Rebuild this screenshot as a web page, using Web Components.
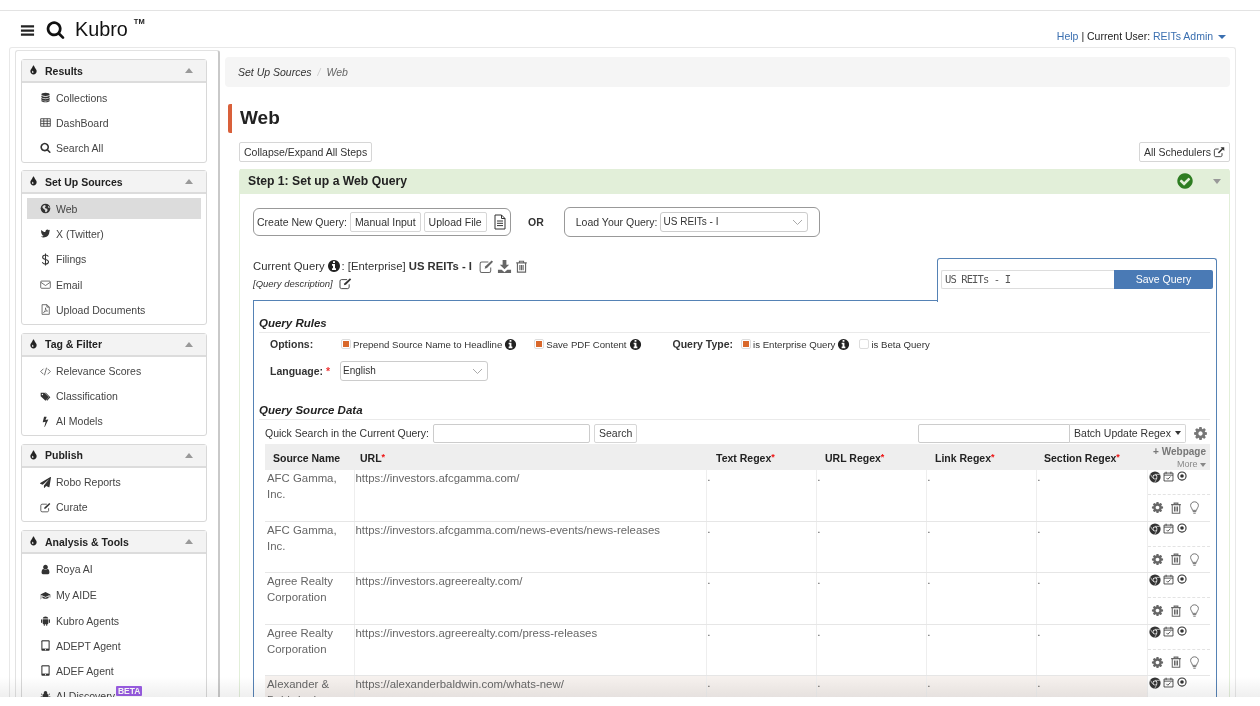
<!DOCTYPE html>
<html lang="en">
<head>
<meta charset="utf-8">
<title>Kubro - Web</title>
<style>
  html, body { margin: 0; height: 706px; overflow: hidden; background: #fff; }
  body { font-family: "Liberation Sans", Arial, sans-serif; color: #333; font-size: 11px; }
</style>
</head>
<body>
<kb-app></kb-app>

<script>
// FontAwesome-4 style glyphs, all in a 1792 box unless the entry says otherwise
const ICONS = {
  search: 'M1216 832q0-185-131.5-316.5t-316.5-131.5-316.5 131.5-131.5 316.5 131.5 316.5 316.5 131.5 316.5-131.5 131.5-316.5zm512 832q0 52-38 90t-90 38q-54 0-90-38l-343-342q-179 124-399 124-143 0-273.5-55.5t-225-150-150-225-55.5-273.5 55.5-273.5 150-225 225-150 273.5-55.5 273.5 55.5 225 150 150 225 55.5 273.5q0 220-124 399l343 343q37 37 37 90z',
  info: 'M1152 1376v-160q0-14-9-23t-23-9h-96v-512q0-14-9-23t-23-9h-320q-14 0-23 9t-9 23v160q0 14 9 23t23 9h96v320h-96q-14 0-23 9t-9 23v160q0 14 9 23t23 9h448q14 0 23-9t9-23zm-128-896v-160q0-14-9-23t-23-9h-192q-14 0-23 9t-9 23v160q0 14 9 23t23 9h192q14 0 23-9t9-23zm640 416q0 209-103 385.5t-279.5 279.5-385.5 103-385.5-103-279.5-279.5-103-385.5 103-385.5 279.5-279.5 385.5-103 385.5 103 279.5 279.5 103 385.5z',
  tint: 'M896 1152q0-36-20-69-1-1-15.5-22.5t-25.5-38-25-44-21-50.5q-4-16-21-16t-21 16q-7 23-21 50.5t-25 44-25.5 38-15.5 22.5q-20 33-20 69 0 53 37.5 90.5t90.5 37.5 90.5-37.5 37.5-90.5zm512-128q0 212-150 362t-362 150-362-150-150-362q0-145 81-275 6-9 62.5-90.5t101-151 99.5-178 83-201.5q9-30 34-47t51-17 51.5 17 33.5 47q28 93 83 201.5t99.5 178 101 151 62.5 90.5q81 127 81 275z',
  cog: 'M1152 896q0-106-75-181t-181-75-181 75-75 181 75 181 181 75 181-75 75-181zm512-109v222q0 12-8 23t-20 13l-185 28q-19 54-39 91 35 50 107 138 10 12 10 25t-9 23q-27 37-99 108t-94 71q-12 0-26-9l-138-108q-44 23-91 38-16 136-29 186-7 28-36 28h-222q-14 0-24.5-8.5t-11.5-21.5l-28-184q-49-16-90-37l-141 107q-10 9-25 9-14 0-25-11-126-114-165-168-7-10-7-23 0-12 8-23 15-21 51-66.5t54-70.5q-27-50-41-99l-183-27q-13-2-21-12.5t-8-23.5v-222q0-12 8-23t19-13l186-28q14-46 39-92-40-57-107-138-10-12-10-24 0-10 9-23 26-36 98.5-107.5t94.5-71.5q13 0 26 10l138 107q44-23 91-38 16-136 29-186 7-28 36-28h222q14 0 24.5 8.5t11.5 21.5l28 184q49 16 90 37l142-107q9-9 24-9 13 0 25 10 129 119 165 170 7 8 7 22 0 12-8 23-15 21-51 66.5t-54 70.5q26 50 41 98l183 28q13 2 21 12.5t8 23.5z',
  twitter: 'M1684 408q-67 98-162 167 1 14 1 42 0 130-38 259.5t-115.5 248.5-184.5 210.5-258 146-323 54.5q-271 0-496-145 35 4 78 4 225 0 401-138-105-2-188-64.5t-114-159.5q33 5 61 5 43 0 85-11-112-23-185.5-111.5t-73.5-205.5v-4q68 38 146 41-66-44-105-115t-39-154q0-88 44-163 121 149 294.5 238.5t371.5 99.5q-8-38-8-74 0-134 94.5-228.5t228.5-94.5q140 0 236 102 109-21 200-76-35 110-132 170 96-11 192-52z',
  check: 'M1412 734q0-28-18-46l-91-90q-19-19-45-19t-45 19l-408 407-226-226q-19-19-45-19t-45 19l-91 90q-18 18-18 46 0 27 18 45l362 362q19 19 45 19 27 0 46-19l543-543q18-18 18-45zm252 162q0 209-103 385.5t-279.5 279.5-385.5 103-385.5-103-279.5-279.5-103-385.5 103-385.5 279.5-279.5 385.5-103 385.5 103 279.5 279.5 103 385.5z',
  bolt: 'M1333 566q18 20 7 44l-540 1157q-13 25-42 25-4 0-14-2-17-5-25.5-19t-4.5-30l197-808-406 101q-4 1-12 1-18 0-31-11-18-15-13-39l201-825q4-14 16-23t28-9h328q19 0 32 12.5t13 29.5q0 8-5 18l-171 463 396-98q8-2 12-2 19 0 34 15z',
  plane: 'M1764 11q33 24 27 64l-256 1536q-5 29-32 45-14 8-31 8-11 0-24-5l-453-185-242 295q-18 23-49 23-13 0-22-4-19-7-30.5-23.5t-11.5-36.5v-349l864-1059-1069 925-395-162q-37-14-40-55-2-40 32-59l1664-960q15-9 32-9 19 0 34 11z',
  user: 'M1536 1399q0 109-62.5 187t-150.5 78h-854q-88 0-150.5-78t-62.5-187q0-85 8.5-160.5t31.5-152 58.5-131 94-89 134.5-34.5q131 128 313 128t313-128q76 0 134.5 34.5t94 89 58.5 131 31.5 152 8.5 160.5zm-256-887q0 159-112.5 271.5t-271.5 112.5-271.5-112.5-112.5-271.5 112.5-271.5 271.5-112.5 271.5 112.5 112.5 271.5z',
};

// the rest are plain drawn shapes, viewBox 0 0 16 16
const SHAPES = {
  database: '<ellipse cx="8" cy="3.4" rx="6" ry="2.4" fill="currentColor"/><path d="M2 5v2c0 1.4 2.7 2.4 6 2.4s6-1 6-2.400V5c-1 1.300-3.500 2-6 2S3 6.300 2 5zM2 8.500v2c0 1.400 2.700 2.400 6 2.400s6-1 6-2.400v-2c-1 1.300-3.500 2-6 2s-5-.7-6-2zM2 11.800v1c0 1.400 2.700 2.200 6 2.200s6-.8 6-2.200v-1c-1 1.300-3.500 2-6 2s-5-.7-6-2z" fill="currentColor"/>',
  table: '<path d="M1 2.500h14v11H1zM1 6h14M1 9.700h14M5.500 2.500v11M10.500 2.500v11" fill="none" stroke="currentColor" stroke-width="1.200"/>',
  globe: '<circle cx="8" cy="8" r="7" fill="currentColor"/><path d="M4 4.500 7 3l1.500 1.500L7 6.500 8.500 8l2 .5.500 2.500-2 2.500-1.500-.5V10L5 8.500 3.500 6.500zM11.500 4l2 1.500.5 2-1.800-.5z" fill="#dcdcdc"/>',
  dollar: '<path d="M11.500 4.500C11 3 9.700 2.400 8 2.400c-2 0-3.500 1-3.500 2.800 0 3.800 7.200 1.900 7.200 5.700 0 1.800-1.600 2.800-3.700 2.800-2 0-3.400-.8-3.900-2.500M8 .5v15" fill="none" stroke="currentColor" stroke-width="1.300"/>',
  mail: '<rect x="1" y="3" width="14" height="10.500" rx="1.300" fill="none" stroke="currentColor"/><path d="m1.500 5 6.500 4.500L14.500 5" fill="none" stroke="currentColor"/>',
  pdf: '<path d="M3 1h7l3.500 3.500V15H3zM10 1v3.500h3.500" fill="none" stroke="currentColor"/><path d="M5 12.500c2-1 3.500-4.500 3-7 .2 2.500 1.500 4.500 3 4.800-2-.2-4 .5-6 2.200z" fill="none" stroke="currentColor" stroke-width=".8"/>',
  code: '<path d="M5 4 1 8l4 4M11 4l4 4-4 4M9.500 2.500l-3 11" fill="none" stroke="currentColor"/>',
  tags: '<path d="M1 2.500h5.500L13 9l-5 5-7-6.500z" fill="currentColor"/><path d="M8.500 2.500 15 9l-4.500 5-1-.9L13.300 9 7 2.500z" fill="currentColor"/><circle cx="3.500" cy="5" r="1" fill="#fff"/>',
  cap: '<path d="M8 3 .5 6.500 8 10l6-2.800V11h1V6.500z" fill="currentColor"/><path d="M3.500 9v2.500C5 13 11 13 12.500 11.500V9L8 11.200z" fill="currentColor"/><path d="M1.500 7v5l-1 1.500" fill="none" stroke="currentColor" stroke-width=".8"/>',
  android: '<path d="M4 5.200c.2-1.800 2-3 4-3s3.800 1.200 4 3zM4 6h8v6.500c0 .6-.4 1-1 1h-.5V15.500H9V13.500H7V15.500H5.500V13.500H5c-.6 0-1-.4-1-1z" fill="currentColor"/><rect x="1.500" y="6" width="1.800" height="5.500" rx=".9" fill="currentColor"/><rect x="12.700" y="6" width="1.800" height="5.500" rx=".9" fill="currentColor"/>',
  tablet: '<rect x="2" y="0.500" width="12" height="15" rx="1.300" fill="currentColor"/><rect x="3.500" y="2" width="9" height="10.500" fill="#fff"/><circle cx="8" cy="14" r=".8" fill="#fff"/>',
  bug: '<ellipse cx="8" cy="9.500" rx="4" ry="5" fill="currentColor"/><circle cx="8" cy="4" r="2.500" fill="currentColor"/><path d="M1.500 5.500 4 7.500M14.500 5.500 12 7.500M1 10h3M15 10h-3M2 14.500l2.500-2M14 14.500l-2.500-2" stroke="currentColor" stroke-width="1.300"/>',
  edit: '<path d="M12.500 9v3.500c0 1-.8 1.800-1.800 1.800H3c-1 0-1.800-.8-1.800-1.800V5C1.200 4 2 3.200 3 3.200h7" fill="none" stroke="currentColor" stroke-width="1.100"/><path d="M13.500 1.500 15 3 8.500 9.500 6 10.300l.8-2.500z" fill="currentColor"/>',
  download: '<path d="M6 1h4v5h3L8 11 3 6h3zM1 11.500h4l3 2.500 3-2.500h4V15H1z" fill="currentColor"/>',
  trash: '<path d="M5.500 3V1.500h5V3M1.500 3.500h13M3 3.500V15h10V3.500M6 6v6.500M8 6v6.500M10 6v6.500" fill="none" stroke="currentColor" stroke-width="1.400"/>',
  file: '<path d="M3 1h6.500L13 4.500V15H3zM9.500 1v3.500H13M5 7h6M5 9.300h6M5 11.600h6" fill="none" stroke="currentColor"/>',
  link: '<path d="M12 9.500v3c0 1-.7 1.700-1.700 1.700H3.500c-1 0-1.700-.7-1.700-1.700V5.700c0-1 .7-1.700 1.700-1.700h4" fill="none" stroke="currentColor" stroke-width="1.200"/><path d="M10 1.500h5v5l-1.800-1.700L8 10 6.500 8.500l5.200-5.200z" fill="currentColor"/>',
  chrome: '<circle cx="8" cy="8" r="7.500" fill="currentColor"/><circle cx="8" cy="8" r="3.200" fill="#fff"/><circle cx="8" cy="8" r="2.200" fill="currentColor"/><path d="M8 4.500h6.500M5 9.500 2 4.500M10.500 10l-3 5.500" stroke="#fff" stroke-width=".8"/>',
  calendar: '<path d="M1.500 3h13v11.500h-13zM1.500 6h13M4.500 1v3M11.500 1v3M5 10l2 2 4-4" fill="none" stroke="currentColor" stroke-width="1.200"/>',
  target: '<circle cx="8" cy="8" r="6.500" fill="none" stroke="currentColor" stroke-width="1.800"/><circle cx="8" cy="8" r="2.900" fill="currentColor"/>',
  bulb: '<path d="M8 1C5.200 1 3.200 3 3.200 5.500c0 2.400 1.900 3.300 2.300 6h5c.4-2.700 2.300-3.600 2.300-6C12.800 3 10.800 1 8 1zM5.800 13h4.400M6.500 15h3" fill="none" stroke="currentColor" stroke-width="1.100"/>',
  bars: '<path d="M1 2.500h14v2.300H1zM1 6.900h14v2.300H1zM1 11.300h14v2.300H1z" fill="currentColor"/>',
};

class KbIcon extends HTMLElement {
  connectedCallback() {
    const name = this.getAttribute('name');
    const size = this.getAttribute('size') || 12;
    const body = ICONS[name]
      ? `<svg viewBox="0 0 1792 1792" width="${size}" height="${size}"><path fill="currentColor" d="${ICONS[name]}"/></svg>`
      : `<svg viewBox="0 0 16 16" width="${size}" height="${size}">${SHAPES[name] || ''}</svg>`;
    this.attachShadow({ mode: 'open' }).innerHTML = `
      <style>
        :host { display: inline-flex; align-items: center; justify-content: center; flex: none; vertical-align: middle; }
        svg { display: block; }
      </style>${body}`;
  }
}
customElements.define('kb-icon', KbIcon);

class KbHeader extends HTMLElement {
  constructor() {
    super();
    this.attachShadow({ mode: 'open' }).innerHTML = `
      <style>
        :host { display: flex; align-items: flex-start; height: 36px; border-top: 1px solid #e3e3e3; margin-top: 10px; position: relative; }
        .burger { margin: 12px 0 0 20px; color: #222; }
        .mag { margin: 9px 0 0 11px; color: #111; }
        .name { font-size: 19.800px; line-height: 24px; margin: 6px 0 0 10px; color: #111; }
        .tm { font-size: 7.500px; font-weight: bold; margin: 6px 0 0 6px; color: #222; }
        .user { margin: 19px 34px 0 auto; font-size: 10.500px; line-height: 13px; color: #222; }
        a { color: #3a6fb0; text-decoration: none; }
        i { display: inline-block; border: 4px solid transparent; border-top-color: #3a6fb0; border-bottom: 0; margin-left: 2px; vertical-align: middle; }
      </style>
      <kb-icon class="burger" name="bars" size="15"></kb-icon>
      <kb-icon class="mag" name="search" size="19"></kb-icon>
      <span class="name">Kubro</span>
      <span class="tm">TM</span>
      <div class="user"><a>Help</a> | Current User: <a>REITs Admin</a> <i></i></div>`;
  }
}
customElements.define('kb-header', KbHeader);

class KbPanel extends HTMLElement {
  constructor() {
    super();
    this.attachShadow({ mode: 'open' }).innerHTML = `
      <style>
        :host { display: block; border: 1px solid #d8d8d8; border-radius: 3px; margin-bottom: 7.800px; background: #fff; }
        header { display: flex; align-items: center; height: 21px; background: #f3f3f3; border-bottom: 2px solid #dcdcdc; font-size: 10.500px; font-weight: bold; color: #222; padding: 0 13px 0 6px; }
        header kb-icon { color: #222; margin-right: 6px; }
        header i { margin-left: auto; border: 4.500px solid transparent; border-bottom: 5px solid #999; border-top: 0; }
        .body { padding: 2px 5px 1.500px; }
      </style>
      <header><kb-icon name="tint" size="11"></kb-icon><span id="t"></span><i></i></header>
      <div class="body"><slot></slot></div>`;
  }
  connectedCallback() {
    this.shadowRoot.getElementById('t').textContent = this.getAttribute('title');
    this.removeAttribute('title');
  }
}
customElements.define('kb-panel', KbPanel);

class KbItem extends HTMLElement {
  constructor() {
    super();
    this.attachShadow({ mode: 'open' }).innerHTML = `
      <style>
        :host { display: flex; align-items: center; height: 25px; font-size: 10.500px; color: #444; padding-left: 12px; box-sizing: border-box; }
        :host([tall]) { height: 26px; }
        :host([active]) { height: 21px; margin: 2px 0; background: #dcdcdc; }
        span { display: inline-flex; justify-content: center; width: 12px; margin-right: 5px; color: #333; }
        b { font: bold 8.500px/10px "Liberation Sans", sans-serif; background: #9b5de5; color: #fff; padding: 0 2px; margin: -9px 0 0 1px; border-radius: 1px; }
      </style>
      <span id="i"></span><slot></slot>`;
  }
  connectedCallback() {
    const s = this.getAttribute('size') || 11;
    this.shadowRoot.getElementById('i').innerHTML = `<kb-icon name="${this.getAttribute('icon')}" size="${s}"></kb-icon>`;
    if (this.hasAttribute('beta')) this.shadowRoot.appendChild(Object.assign(document.createElement('b'), { textContent: 'BETA' }));
  }
}
customElements.define('kb-item', KbItem);

class KbSidebar extends HTMLElement {
  constructor() {
    super();
    this.attachShadow({ mode: 'open' }).innerHTML = `
      <style>
        :host { display: block; width: 205px; margin: 2px 0 0 5px; padding: 8px 11px 0 5px; box-sizing: border-box; border: 1px solid #e2e2e2; border-right: 2px solid #c9c9c9; border-radius: 3px 3px 0 0; height: 660px; overflow: hidden; flex: none; }
      </style>
      <kb-panel title="Results">
        <kb-item icon="database">Collections</kb-item>
        <kb-item icon="table">DashBoard</kb-item>
        <kb-item icon="search">Search All</kb-item>
      </kb-panel>
      <kb-panel title="Set Up Sources">
        <kb-item icon="globe" active>Web</kb-item>
        <kb-item icon="twitter">X (Twitter)</kb-item>
        <kb-item icon="dollar" size="13" tall>Filings</kb-item>
        <kb-item icon="mail">Email</kb-item>
        <kb-item icon="pdf">Upload Documents</kb-item>
      </kb-panel>
      <kb-panel title="Tag &amp; Filter">
        <kb-item icon="code">Relevance Scores</kb-item>
        <kb-item icon="tags">Classification</kb-item>
        <kb-item icon="bolt">AI Models</kb-item>
      </kb-panel>
      <kb-panel title="Publish">
        <kb-item icon="plane">Robo Reports</kb-item>
        <kb-item icon="edit">Curate</kb-item>
      </kb-panel>
      <kb-panel title="Analysis &amp; Tools">
        <kb-item icon="user" tall>Roya AI</kb-item>
        <kb-item icon="cap" tall>My AIDE</kb-item>
        <kb-item icon="android">Kubro Agents</kb-item>
        <kb-item icon="tablet">ADEPT Agent</kb-item>
        <kb-item icon="tablet">ADEF Agent</kb-item>
        <kb-item icon="bug" beta>AI Discovery</kb-item>
      </kb-panel>`;
  }
}
customElements.define('kb-sidebar', KbSidebar);

class KbBtn extends HTMLElement {
  constructor() {
    super();
    this.attachShadow({ mode: 'open' }).innerHTML = `
      <style>
        :host { display: inline-flex; align-items: center; gap: 2px; height: 20px; box-sizing: border-box; padding: 0 4px; border: 1px solid #d6d6d6; border-radius: 2px; background: #fff; color: #333; font-size: 10.500px; white-space: nowrap; }
      </style><slot></slot>`;
  }
}
customElements.define('kb-btn', KbBtn);

class KbSelect extends HTMLElement {
  constructor() {
    super();
    this.attachShadow({ mode: 'open' }).innerHTML = `
      <style>
        :host { display: inline-flex; align-items: center; justify-content: space-between; box-sizing: border-box; height: 20px; padding: 0 4px 2px 2px; border: 1px solid #ccc; border-radius: 3px; background: #fff; color: #333; font-size: 10px; }
        svg { display: block; margin-top: 2px; }
      </style>
      <slot></slot>
      <svg width="11" height="7" viewBox="0 0 11 7"><path d="M1 1l4.500 4.500L10 1" fill="none" stroke="#aaa"/></svg>`;
  }
}
customElements.define('kb-select', KbSelect);

class KbCheck extends HTMLElement {
  constructor() {
    super();
    this.attachShadow({ mode: 'open' }).innerHTML = `
      <style>
        :host { display: inline-block; box-sizing: border-box; width: 10px; height: 10px; border: 1px solid #ddd; border-radius: 2px; background: #fff; position: relative; flex: none; }
        :host([on])::after { content: ""; position: absolute; inset: 1px; background: #d9682b; }
      </style>`;
  }
}
customElements.define('kb-check', KbCheck);

class KbRules extends HTMLElement {
  constructor() {
    super();
    this.attachShadow({ mode: 'open' }).innerHTML = `
      <style>
        :host { display: block; font-size: 9.650px; color: #333; }
        h4 { margin: 0 0 0 5px; font: italic bold 11.500px/14px "Liberation Sans", sans-serif; color: #222; padding-bottom: 2px; border-bottom: 1px solid #eaeaea; }
        .row { display: flex; align-items: center; height: 20px; }
        label { display: inline-flex; align-items: center; gap: 2px; }
        .k { font-weight: bold; width: 71px; margin-left: 16px; font-size: 10.500px; }
        .k em { color: #e33; font-style: normal; }
        kb-icon { color: #222; }
      </style>
      <h4>Query Rules</h4>
      <div class="row" style="margin-top:1px">
        <span class="k">Options:</span>
        <label><kb-check on></kb-check>Prepend Source Name to Headline<kb-icon name="info" size="13"></kb-icon></label>
        <label style="margin-left:17px"><kb-check on></kb-check>Save PDF Content<kb-icon name="info" size="13"></kb-icon></label>
        <b style="margin-left:31px;font-size:10.500px">Query Type:</b>
        <label style="margin-left:8px"><kb-check on></kb-check>is Enterprise Query<kb-icon name="info" size="13"></kb-icon></label>
        <label style="margin-left:9px"><kb-check></kb-check>is Beta Query</label>
      </div>
      <div class="row" style="margin-top:7px">
        <span class="k">Language: <em>*</em></span>
        <kb-select style="width:148px;margin-left:-1px">English</kb-select>
      </div>`;
  }
}
customElements.define('kb-rules', KbRules);

const ROWS = [
  ['AFC Gamma, Inc.', 'https://investors.afcgamma.com/'],
  ['AFC Gamma, Inc.', 'https://investors.afcgamma.com/news-events/news-releases'],
  ['Agree Realty Corporation', 'https://investors.agreerealty.com/'],
  ['Agree Realty Corporation', 'https://investors.agreerealty.com/press-releases'],
  ['Alexander &amp; Baldwin, Inc.', 'https://alexanderbaldwin.com/whats-new/'],
];

class KbSources extends HTMLElement {
  constructor() {
    super();
    const star = '<em>*</em>';
    this.attachShadow({ mode: 'open' }).innerHTML = `
      <style>
        :host { display: block; font-size: 11px; color: #333; }
        h4 { margin: 0 0 0 5px; font: italic bold 11.500px/14px "Liberation Sans", sans-serif; color: #222; padding-bottom: 2px; border-bottom: 1px solid #eaeaea; }
        .tools { display: flex; align-items: center; height: 20px; margin: 3px 0 1px 11px; font-size: 10.500px; }
        .in { box-sizing: border-box; height: 19px; border: 1px solid #ccc; border-radius: 2px; background: #fff; flex: none; }
        .tools kb-btn { margin-left: 5px; }
        .right { margin-left: auto; display: flex; align-items: center; margin-right: 2px; }
        .right kb-btn { margin: 0; width: 116px; justify-content: center; border-radius: 0 2px 2px 0; border-left: 0; gap: 4px; }
        .right i { border: 3.500px solid transparent; border-top: 4px solid #333; border-bottom: 0; }
        .right kb-icon { margin-left: 7px; color: #777; }
        table { border-collapse: collapse; table-layout: fixed; width: 945px; margin: 1px 0 0 11px; }
        th { background: #eee; height: 25px; padding: 1px 0 0; font-size: 10.500px; font-weight: bold; color: #222; text-align: left; vertical-align: middle; }
        th em { color: #e11; font-style: normal; vertical-align: 2px; font-size: 9px; }
        td { padding: 0 2px 0 1px; vertical-align: top; color: #666; line-height: 16px; border-left: 1px solid #eee; border-bottom: 1px solid #e6e6e6; font-size: 11.400px; }
        td:first-child { border-left: 0; padding-left: 2px; }
        tbody tr:last-child td:not(.act) { background: #f6f1ee; }
        td.dot { font-size: 10px; color: #444; }
        td.act { padding: 0; }
        .a1, .a2 { display: flex; align-items: center; color: #333; }
        .a1 { height: 25.250px; align-items: flex-start; gap: 2px; padding: 1px 0 0 1px; box-sizing: border-box; border-bottom: 1px dashed #e3e3e3; }
        .a1 kb-icon:last-child { margin-left: 1px; }
        .a2 { height: 25.250px; gap: 6px; padding-left: 3px; color: #666; }
        .plus { display: block; text-align: right; padding-right: 4px; color: #777; font-size: 10px; line-height: 12px; }
        .more { display: block; text-align: right; padding-right: 4px; color: #888; font-size: 9px; font-weight: normal; line-height: 12px; }
        .more i { display: inline-block; border: 3.500px solid transparent; border-top: 4px solid #888; border-bottom: 0; }
      </style>
      <h4>Query Source Data</h4>
      <div class="tools">
        <span>Quick Search in the Current Query:</span>
        <span class="in" style="width:157px;margin-left:4px"></span>
        <kb-btn style="height:19px;margin-left:4px">Search</kb-btn>
        <div class="right">
          <span class="in" style="width:152px;border-radius:2px 0 0 2px"></span>
          <kb-btn style="height:19px">Batch Update Regex <i></i></kb-btn>
          <kb-icon name="cog" size="15"></kb-icon>
        </div>
      </div>
      <table>
        <colgroup><col style="width:89px"><col style="width:352px"><col style="width:110px"><col style="width:110px"><col style="width:110px"><col style="width:111px"><col style="width:63px"></colgroup>
        <thead><tr>
          <th style="padding-left:8px">Source Name</th><th style="padding-left:6px">URL${star}</th>
          <th style="padding-left:10px">Text Regex${star}</th><th style="padding-left:9px">URL Regex${star}</th>
          <th style="padding-left:9px">Link Regex${star}</th><th style="padding-left:8px">Section Regex${star}</th>
          <th><span class="plus"><b>+ Webpage</b></span><span class="more">More <i></i></span></th>
        </tr></thead>
        <tbody>${ROWS.map(([n, u]) => `<tr>
          <td>${n}</td><td>${u}</td><td class="dot">.</td><td class="dot">.</td><td class="dot">.</td><td class="dot">.</td>
          <td class="act"><div class="a1"><kb-icon name="chrome" size="12"></kb-icon><kb-icon name="calendar" size="11"></kb-icon><kb-icon name="target" size="10"></kb-icon></div>
          <div class="a2"><kb-icon name="cog" size="13"></kb-icon><kb-icon name="trash" size="12"></kb-icon><kb-icon name="bulb" size="13"></kb-icon></div></td>
        </tr>`).join('')}</tbody>
      </table>`;
  }
}
customElements.define('kb-sources', KbSources);

class KbStep extends HTMLElement {
  constructor() {
    super();
    this.attachShadow({ mode: 'open' }).innerHTML = `
      <style>
        :host { display: block; border: 1px solid #e2efd9; border-top: 0; border-bottom: 0; border-radius: 3px 3px 0 0; margin-top: 7px; }
        header { display: flex; align-items: center; height: 24px; padding: 0 8px 1px; background: #e2efd9; font-size: 12.200px; font-weight: bold; color: #222; }
        header kb-icon { margin-left: auto; color: #2e7d22; }
        header i { margin: 0 0 0 19px; border: 4px solid transparent; border-top: 5px solid #999; border-bottom: 0; }
        .body { padding: 13px 12px 0 13px; }
        .load { display: flex; align-items: center; }
        .group { display: inline-flex; align-items: center; box-sizing: border-box; border: 1px solid #999; border-radius: 6px; font-size: 10.500px; gap: 3px; padding: 0 3px; white-space: nowrap; }
        .or { font-weight: bold; font-size: 10.500px; margin: 0 20px 0 17px; }
        .cur { display: flex; margin-top: 21px; }
        .left { flex: 1; border-bottom: 1px solid #5582b5; font-size: 11.300px; }
        .q { display: flex; align-items: center; height: 16px; color: #333; white-space: pre; }
        .q kb-icon.g { color: #666; }
        .d { display: flex; align-items: center; font-style: italic; font-size: 9.500px; gap: 6px; height: 14px; color: #333; margin-top: 2px; }
        .tab { width: 280px; box-sizing: border-box; border: 1px solid #5582b5; border-bottom: 0; border-radius: 3px 3px 0 0; background: #fff; padding: 11px 3px 0; display: flex; height: 44px; align-self: flex-end; margin-bottom: -1px; }
        .name { flex: 1; box-sizing: border-box; height: 19px; border: 1px solid #ddd; border-right: 0; font: 10.500px/17px "DejaVu Sans Mono", monospace; letter-spacing: -.9px; color: #555; padding-left: 3px; border-radius: 2px 0 0 2px; }
        .save { width: 99px; height: 19px; background: #4a7ab5; color: #fff; font-size: 10.500px; text-align: center; line-height: 19px; border-radius: 0 2px 2px 0; }
        .box { border: 1px solid #5582b5; border-top: 0; padding: 15px 6px 0 0; height: 500px; }
        .sec { margin-top: 22px; }
      </style>
      <header>Step 1: Set up a Web Query<kb-icon name="check" size="18"></kb-icon><i></i></header>
      <div class="body">
        <div class="load">
          <div class="group" style="width:258px;height:28px">Create New Query:
            <kb-btn>Manual Input</kb-btn><kb-btn>Upload File</kb-btn><kb-icon name="file" size="16" style="color:#333;margin-left:2px"></kb-icon></div>
          <span class="or">OR</span>
          <div class="group" style="width:256px;height:30px;padding:0 11px">Load Your Query:
            <kb-select style="width:148px">US REITs - I</kb-select></div>
        </div>
        <div class="cur">
          <div class="left">
            <div class="q">Current Query<kb-icon name="info" size="14" style="color:#222;margin:0 1px 0 2px"></kb-icon>: [Enterprise] <b>US REITs - I</b><kb-icon class="g" name="edit" size="15" style="margin-left:7px"></kb-icon><kb-icon class="g" name="download" size="15" style="margin-left:3px"></kb-icon><kb-icon class="g" name="trash" size="13" style="margin-left:3px"></kb-icon></div>
            <div class="d">[Query description] <kb-icon class="g" name="edit" size="13"></kb-icon></div>
          </div>
          <div class="tab"><div class="name">US REITs - I</div><div class="save">Save Query</div></div>
        </div>
        <div class="box">
          <kb-rules></kb-rules>
          <kb-sources class="sec"></kb-sources>
        </div>
      </div>`;
  }
}
customElements.define('kb-step', KbStep);

class KbMain extends HTMLElement {
  constructor() {
    super();
    this.attachShadow({ mode: 'open' }).innerHTML = `
      <style>
        :host { display: block; flex: 1; min-width: 0; padding: 9px 5px 0 5px; }
        .crumb { height: 30px; background: #f5f5f5; border-radius: 4px; font-style: italic; font-size: 10.500px; display: flex; align-items: center; padding-left: 13px; color: #333; }
        .crumb s { text-decoration: none; color: #ccc; margin: 0 5px 0 6px; }
        .crumb span { color: #666; margin-left: 1px; }
        h1 { margin: 17px 0 0 3px; border-left: 4px solid #d9603a; border-radius: 2px; padding-left: 8px; font-size: 19px; line-height: 27px; height: 29px; color: #222; }
        .wrap { margin-left: 14px; }
        .bar { display: flex; justify-content: space-between; margin-top: 9px; }
        kb-icon { color: #333; }
      </style>
      <div class="crumb">Set Up Sources <s>/</s> <span>Web</span></div>
      <h1>Web</h1>
      <div class="wrap">
        <div class="bar"><kb-btn>Collapse/Expand All Steps</kb-btn><kb-btn>All Schedulers <kb-icon name="link" size="12"></kb-icon></kb-btn></div>
        <kb-step></kb-step>
      </div>`;
  }
}
customElements.define('kb-main', KbMain);

class KbApp extends HTMLElement {
  constructor() {
    super();
    this.attachShadow({ mode: 'open' }).innerHTML = `
      <style>
        :host { display: block; height: 706px; overflow: hidden; position: relative; }
        .shell { display: flex; width: 1227px; margin-left: 9px; height: 660px; box-sizing: border-box; border: 1px solid #e8e8e8; border-bottom: 0; border-radius: 3px 3px 0 0; }
        .fade { position: absolute; left: 0; right: 0; bottom: 9px; height: 20px; background: linear-gradient(to bottom, #fff, #efefef); mix-blend-mode: multiply; }
        .foot { position: absolute; left: 0; right: 0; bottom: 0; height: 9px; background: #fff; }
      </style>
      <kb-header></kb-header>
      <div class="shell"><kb-sidebar></kb-sidebar><kb-main></kb-main></div>
      <div class="fade"></div>
      <div class="foot"></div>`;
  }
}
customElements.define('kb-app', KbApp);
</script>
</body>
</html>
